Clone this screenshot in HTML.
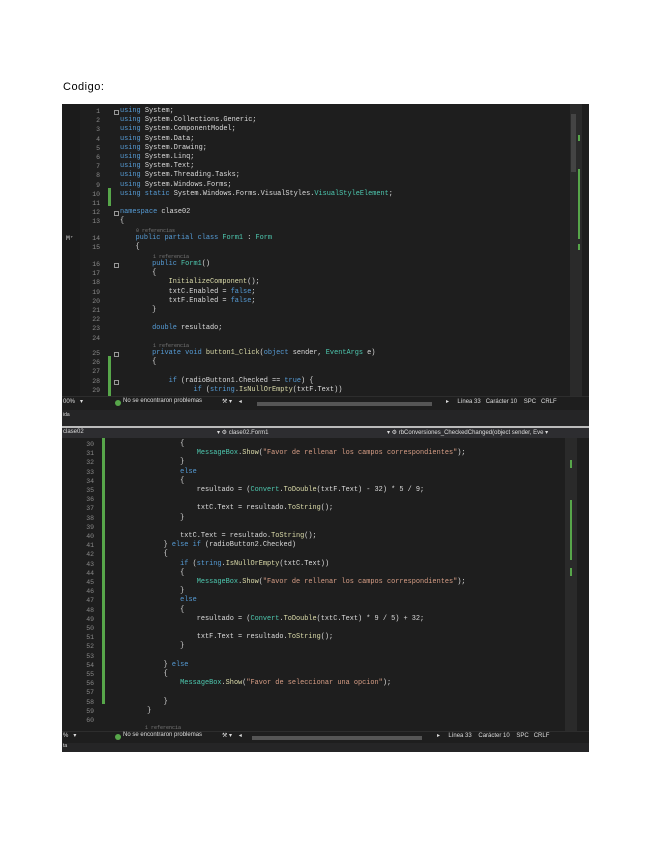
<!DOCTYPE html>
<html><head><meta charset="utf-8"><style>
body{margin:0;background:#fff;width:655px;height:848px;position:relative;overflow:hidden;font-family:"Liberation Sans",sans-serif}
.t{position:absolute;left:63px;top:81px;font-size:11px;color:#000;letter-spacing:.5px}
.blk{position:absolute;left:62px;width:527px;background:#1e1e1e;overflow:hidden}
.l{position:absolute;white-space:pre;font-family:"Liberation Mono",monospace;font-size:6.9px;line-height:9.2px;color:#dcdcdc;margin-top:1.5px}
.n{position:absolute;font-family:"Liberation Mono",monospace;font-size:6.5px;line-height:9.2px;color:#8a8a8a;width:20px;text-align:right;margin-top:1.5px}
.k{color:#569cd6}.ty{color:#4ec9b0}.s{color:#d69d85}.m{color:#dcdcaa}.c{color:#7a7a7a;font-size:5px}
.g{position:absolute;background:#57a64a;width:3px}
.sb{position:absolute;font-size:6px;color:#ddd;white-space:pre}
.bx{position:absolute;width:5px;height:5px;border:1px solid #999;box-sizing:border-box;margin-top:1.5px}
</style></head><body>
<div class="t">Codigo:</div>

<div class="blk" style="top:104px;height:322px">
 <div style="position:absolute;left:0;top:0;width:18px;height:292px;background:#1b1b1b"></div>
 <div style="position:absolute;right:7px;top:0;width:12px;height:292px;background:#2a2a2a"></div>
 <div style="position:absolute;right:13px;top:10px;width:5px;height:58px;background:#444"></div>
 <div class="g" style="left:46px;top:84px;height:18px"></div>
 <div class="g" style="left:46px;top:252px;height:40px"></div>
 <div class="g" style="right:9px;top:31px;height:6px;width:2px"></div>
 <div class="g" style="right:9px;top:65px;height:70px;width:2px"></div>
 <div class="g" style="right:9px;top:140px;height:6px;width:2px"></div>
 <div style="position:absolute;left:0;top:292px;width:527px;height:13px;background:#1e1e1e;border-top:1px solid #2d2d2d"></div>
 <div class="sb" style="left:1px;top:294px">00%   ▾ </div>
 <div style="position:absolute;left:53px;top:296px;width:6px;height:6px;border-radius:3px;background:#57a64a"></div>
 <div class="sb" style="left:61px;top:294px">No se encontraron problemas</div>
 <div class="sb" style="left:160px;top:294px">⚒ ▾    ◂</div>
 <div style="position:absolute;left:195px;top:298px;width:175px;height:4px;background:#555"></div>
 <div class="sb" style="left:384px;top:294px">▸     Línea 33   Carácter 10    SPC   CRLF</div>
 <div style="position:absolute;left:0;top:306px;width:527px;height:16px;background:#252526"></div>
 <div class="sb" style="left:1px;top:308px;font-size:5px">ida</div>
 <div class="n" style="left:4px;top:128px;color:#ccc;text-align:left">M⁺</div>
</div>
<div style="position:absolute;left:62px;top:426px;width:527px;height:2px;background:#bbb"></div>

<div class="blk" style="top:428px;height:324px">
 <div style="position:absolute;left:0;top:0;width:527px;height:10px;background:#2d2d30"></div>
 <div class="sb" style="left:1px;top:1px">clase02</div>
 <div class="sb" style="left:155px;top:1px">▾ ⚙ clase02.Form1</div>
 <div class="sb" style="left:325px;top:1px">▾ ⚙ rbConversiones_CheckedChanged(object sender, Eve ▾</div>
 <div style="position:absolute;right:12px;top:10px;width:12px;height:295px;background:#2a2a2a"></div>
 <div class="g" style="left:40px;top:10px;height:266px"></div>
 <div class="g" style="right:17px;top:32px;height:8px;width:2px"></div>
 <div class="g" style="right:17px;top:72px;height:60px;width:2px"></div>
 <div class="g" style="right:17px;top:140px;height:8px;width:2px"></div>
 <div style="position:absolute;left:0;top:303px;width:527px;height:12px;background:#1e1e1e;border-top:1px solid #2d2d2d"></div>
 <div class="sb" style="left:1px;top:304px">%   ▾ </div>
 <div style="position:absolute;left:53px;top:306px;width:6px;height:6px;border-radius:3px;background:#57a64a"></div>
 <div class="sb" style="left:61px;top:304px">No se encontraron problemas</div>
 <div class="sb" style="left:160px;top:304px">⚒ ▾    ◂</div>
 <div style="position:absolute;left:190px;top:308px;width:170px;height:4px;background:#555"></div>
 <div class="sb" style="left:375px;top:304px">▸     Línea 33    Carácter 10    SPC   CRLF</div>
 <div style="position:absolute;left:0;top:315px;width:527px;height:9px;background:#252526"></div>
 <div class="sb" style="left:1px;top:315px;font-size:5px">ta</div>
</div>

<div class="bx" style="left:114px;top:108px"></div>
<div class="bx" style="left:114px;top:209px"></div>
<div class="bx" style="left:114px;top:261px"></div>
<div class="bx" style="left:114px;top:350px"></div>
<div class="bx" style="left:114px;top:378px"></div>

<div class="n" style="left:80px;top:105.4px">1<br>2<br>3<br>4<br>5<br>6<br>7<br>8<br>9<br>10<br>11<br>12<br>13</div>
<div class="l" style="left:120px;top:105.4px"><span class="k">using</span> System;
<span class="k">using</span> System.Collections.Generic;
<span class="k">using</span> System.ComponentModel;
<span class="k">using</span> System.Data;
<span class="k">using</span> System.Drawing;
<span class="k">using</span> System.Linq;
<span class="k">using</span> System.Text;
<span class="k">using</span> System.Threading.Tasks;
<span class="k">using</span> System.Windows.Forms;
<span class="k">using static</span> System.Windows.Forms.VisualStyles.<span class="ty">VisualStyleElement</span>;

<span class="k">namespace</span> clase02
{</div>
<div class="l c" style="left:136px;top:225px">0 referencias</div>
<div class="n" style="left:80px;top:232.4px">14<br>15</div>
<div class="l" style="left:119px;top:232.4px">    <span class="k">public partial class</span> <span class="ty">Form1</span> : <span class="ty">Form</span>
    {</div>
<div class="l c" style="left:153px;top:251px">1 referencia</div>
<div class="n" style="left:80px;top:258.4px">16<br>17<br>18<br>19<br>20<br>21<br>22<br>23<br>24</div>
<div class="l" style="left:119px;top:258.4px">        <span class="k">public</span> <span class="ty">Form1</span>()
        {
            <span class="m">InitializeComponent</span>();
            txtC.Enabled = <span class="k">false</span>;
            txtF.Enabled = <span class="k">false</span>;
        }

        <span class="k">double</span> resultado;
</div>
<div class="l c" style="left:153px;top:340px">1 referencia</div>
<div class="n" style="left:80px;top:347.4px">25<br>26<br>27<br>28<br>29</div>
<div class="l" style="left:119px;top:347.4px">        <span class="k">private void</span> <span class="m">button1_Click</span>(<span class="k">object</span> sender, <span class="ty">EventArgs</span> e)
        {

            <span class="k">if</span> (radioButton1.Checked == <span class="k">true</span>) {
                  <span class="k">if</span> (<span class="k">string</span>.<span class="m">IsNullOrEmpty</span>(txtF.Text))</div>

<div class="n" style="left:74px;top:438.4px">30<br>31<br>32<br>33<br>34<br>35<br>36<br>37<br>38<br>39<br>40<br>41<br>42<br>43<br>44<br>45<br>46<br>47<br>48<br>49<br>50<br>51<br>52<br>53<br>54<br>55<br>56<br>57<br>58<br>59<br>60</div>
<div class="l" style="left:114px;top:438.4px">                {
                    <span class="ty">MessageBox</span>.<span class="m">Show</span>(<span class="s">"Favor de rellenar los campos correspondientes"</span>);
                }
                <span class="k">else</span>
                {
                    resultado = (<span class="ty">Convert</span>.<span class="m">ToDouble</span>(txtF.Text) - 32) * 5 / 9;

                    txtC.Text = resultado.<span class="m">ToString</span>();
                }

                txtC.Text = resultado.<span class="m">ToString</span>();
            } <span class="k">else if</span> (radioButton2.Checked)
            {
                <span class="k">if</span> (<span class="k">string</span>.<span class="m">IsNullOrEmpty</span>(txtC.Text))
                {
                    <span class="ty">MessageBox</span>.<span class="m">Show</span>(<span class="s">"Favor de rellenar los campos correspondientes"</span>);
                }
                <span class="k">else</span>
                {
                    resultado = (<span class="ty">Convert</span>.<span class="m">ToDouble</span>(txtC.Text) * 9 / 5) + 32;

                    txtF.Text = resultado.<span class="m">ToString</span>();
                }

            } <span class="k">else</span>
            {
                <span class="ty">MessageBox</span>.<span class="m">Show</span>(<span class="s">"Favor de seleccionar una opcion"</span>);

            }
        }
</div>
<div class="l c" style="left:145px;top:722px">1 referencia</div>
</body></html>
